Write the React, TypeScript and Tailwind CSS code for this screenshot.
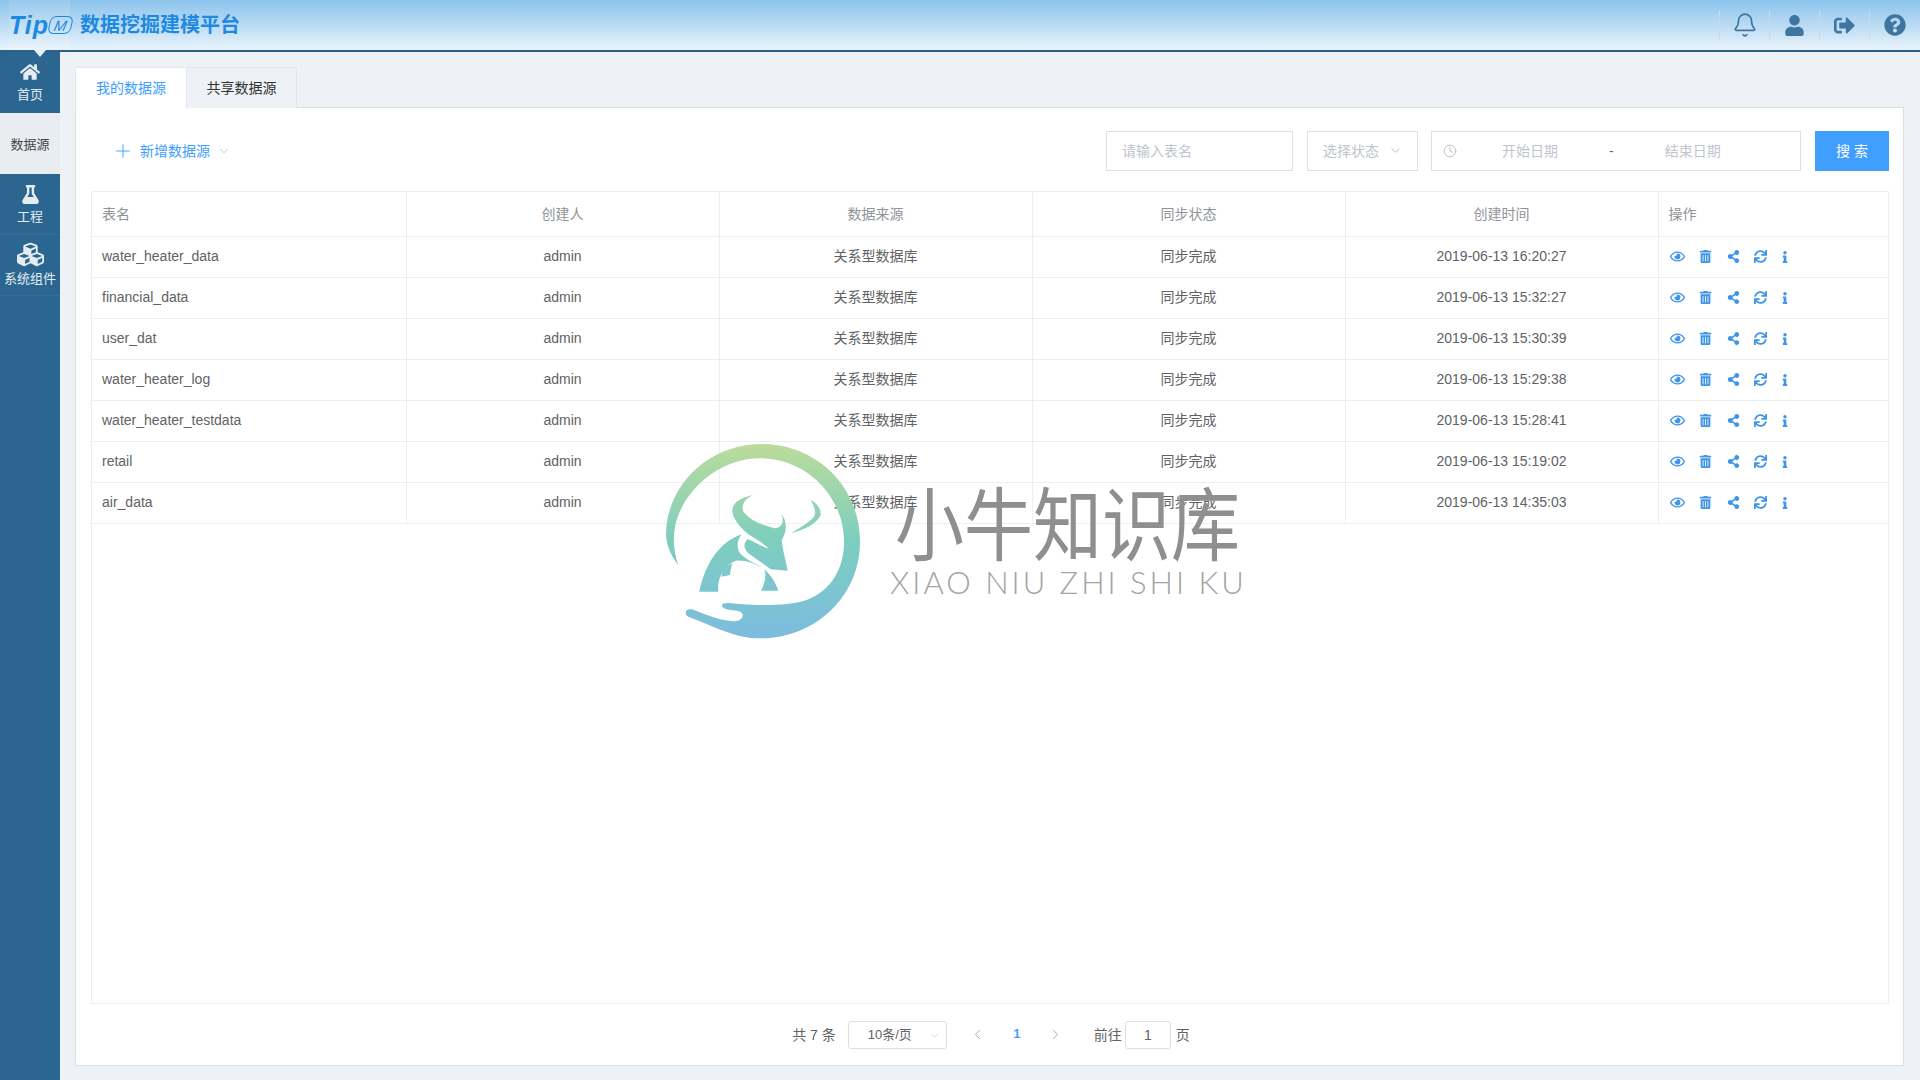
import { FaHome, FaFlask, FaCubes, FaRegEye, FaTrashAlt, FaShareAlt, FaSync, FaInfo, FaUser, FaSignOutAlt, FaQuestionCircle } from 'react-icons/fa';
import { Bell, ChevronDown, ChevronLeft, ChevronRight, Clock, Plus } from 'lucide-react';

interface Row {
    name: string
    time: string
}

const rows: Row[] = [
    { name: 'water_heater_data', time: '2019-06-13 16:20:27' },
    { name: 'financial_data', time: '2019-06-13 15:32:27' },
    { name: 'user_dat', time: '2019-06-13 15:30:39' },
    { name: 'water_heater_log', time: '2019-06-13 15:29:38' },
    { name: 'water_heater_testdata', time: '2019-06-13 15:28:41' },
    { name: 'retail', time: '2019-06-13 15:19:02' },
    { name: 'air_data', time: '2019-06-13 14:35:03' },
]

const Watermark = () => (
    <div className="absolute left-[660px] top-[440px] flex pointer-events-none">
        <svg width="210" height="205" viewBox="0 0 630 615">
            <defs>
                <linearGradient id="wm" x1="0" y1="12" x2="0" y2="595" gradientUnits="userSpaceOnUse">
                    <stop offset="0" stopColor="#bbdc9a" />
                    <stop offset="0.5" stopColor="#7dcebf" />
                    <stop offset="1" stopColor="#7cbcdf" />
                </linearGradient>
            </defs>
            <path fill="url(#wm)" d="M55 375 C30 345 18 310 18 280 C22 130 150 12 305 12 C470 12 600 140 600 305 C600 470 465 595 300 595 C225 595 165 560 85 530 C72 522 75 505 95 508 C130 520 170 540 220 544 C245 545 258 525 240 515 C225 508 195 512 187 500 C182 490 195 487 215 490 C280 497 380 500 440 480 C515 450 552 385 552 305 C552 170 440 55 300 55 C170 55 65 160 45 260 C38 300 42 340 55 375 Z" />
            <path fill="url(#wm)" d="M280 165 C240 172 215 190 217 215 C222 245 250 270 268 285 C285 295 310 310 326 326 C300 318 275 300 262 298 C250 310 250 325 265 340 C290 358 320 378 332 388 L383 392 C378 365 368 330 365 300 C378 280 385 250 365 222 C372 245 368 262 345 265 C315 258 275 245 250 215 C242 195 255 175 280 165 Z" />
            <path fill="url(#wm)" d="M245 283 C180 305 135 370 118 455 H175 C170 420 190 375 228 362 C260 360 285 372 305 382 L312 388 C322 405 312 435 303 452 H355 C345 420 325 395 300 378 C270 365 255 355 240 340 C228 320 232 300 245 283 Z" />
            <path fill="url(#wm)" d="M218 370 C195 378 185 395 185 410 L210 405 C212 392 212 382 218 370 Z" />
            <path fill="url(#wm)" d="M452 180 C462 200 470 215 462 230 C445 250 415 265 393 280 C425 270 470 255 482 225 C484 205 468 188 452 180 Z" />
        </svg>
        <div className="ml-[20px] mt-[42px] flex flex-col items-start text-[#8f8f8f]">
            <div className="ml-[5px] text-[69px] leading-[80px] whitespace-nowrap scale-y-[1.15] origin-top">小牛知识库</div>
            <div className="mt-[2px] text-[31px] leading-[36px] font-light tracking-[3px] whitespace-nowrap font-['Lato',sans-serif] text-[#a3a3a3]">XIAO NIU ZHI SHI KU</div>
        </div>
    </div>
)

const App = () => {
    return (
        <div className="relative h-[1080px] w-[1920px] overflow-hidden flex flex-col bg-[#eef2f6] text-sm text-[#606266] font-['Liberation_Sans','Noto_Sans_CJK_SC',sans-serif]">
            <header className="h-[52px] shrink-0 flex items-center border-b-2 border-[#2a618c] bg-gradient-to-b from-[#8bc3ec] to-[#e9f3fa]">
                <div className="ml-[9px] w-[61px] h-full flex items-center bg-white/10 text-[#1f89e2]">
                    <span className="text-[25px] leading-none italic font-bold tracking-[1px]">Tip</span>
                    <span className="w-[23px] h-[18px] shrink-0 border-[1.5px] border-[#1f89e2] rounded-[6px] -skew-x-12 flex items-center justify-center text-[15px] leading-none italic">M</span>
                </div>
                <h1 className="ml-[10px] text-[20px] font-bold text-[#1f89e2]">数据挖掘建模平台</h1>
                <div className="ml-auto mr-[1px] flex">
                    <div className="w-[50px] h-[30px] border-l border-[#c6dbe9] flex items-center justify-center text-[#3f769f]"><Bell size={26} strokeWidth={1.5} /></div>
                    <div className="w-[50px] h-[30px] border-l border-[#c6dbe9] flex items-center justify-center text-[#3f769f] text-[21px]"><FaUser /></div>
                    <div className="w-[50px] h-[30px] border-l border-[#c6dbe9] flex items-center justify-center text-[#3f769f] text-[21px]"><FaSignOutAlt /></div>
                    <div className="w-[50px] h-[30px] border-l border-[#c6dbe9] flex items-center justify-center text-[#3f769f] text-[22px]"><FaQuestionCircle /></div>
                </div>
            </header>

            <div className="flex-1 flex min-h-0">
                <aside className="relative w-[60px] shrink-0 bg-[#2a668f] text-[13px] text-[#e6edf2]">
                    <div className="absolute left-[34px] -top-[2px] w-0 h-0 border-x-[6px] border-x-transparent border-t-[7px] border-t-[#e4eff7]" />
                    <div className="h-[61px] flex flex-col items-center justify-end pb-[7px]">
                        <FaHome className="text-[20px] mb-[2px]" />
                        <span className="leading-[22px]">首页</span>
                    </div>
                    <div className="h-[61px] pt-[4px] flex items-center justify-center bg-[#e9edf1] text-[#444]">数据源</div>
                    <div className="h-[61px] flex flex-col items-center justify-end pb-[6px] border-b border-[#336f98]">
                        <FaFlask className="text-[19px] mb-[2px]" />
                        <span className="leading-[22px]">工程</span>
                    </div>
                    <div className="h-[61px] flex flex-col items-center justify-end pb-[5px] border-b border-[#336f98]">
                        <FaCubes className="text-[27px]" />
                        <span className="leading-[22px] whitespace-nowrap">系统组件</span>
                    </div>
                </aside>

                <main className="flex-1 min-w-0 flex flex-col pt-[15px] pl-[15px] pr-[16px] pb-[14px]">
                    <div className="flex h-[41px] shrink-0 relative z-10 -mb-[1px]">
                        <div className="w-[112px] h-[42px] pb-[2px] bg-white border border-b-0 border-[#e4e7ed] text-[#409eff] flex items-center justify-center">我的数据源</div>
                        <div className="w-[110px] h-[41px] pb-[1px] bg-[#eef2f6] border border-l-0 border-b-0 border-[#e4e7ed] text-[#333] flex items-center justify-center">共享数据源</div>
                    </div>
                    <section className="flex-1 min-h-0 flex flex-col bg-white border border-[#dcdfe6] pl-[15px] pr-[14px]">
                        <div className="h-[83px] pt-[2px] shrink-0 flex items-center">
                            <button className="ml-[21px] flex items-center text-[#409eff]">
                                <Plus size={22} strokeWidth={1} />
                                <span className="ml-[6px]">新增数据源</span>
                                <ChevronDown size={14} strokeWidth={1.2} className="ml-[7px] text-[#8fb9e4]" />
                            </button>
                            <div className="ml-auto flex items-center">
                                <input placeholder="请输入表名" className="w-[187px] h-[40px] border border-[#dcdfe6] px-[15px] placeholder:text-[#c0c4cc] outline-none" />
                                <div className="ml-[14px] w-[111px] h-[40px] border border-[#dcdfe6] flex items-center pl-[15px] text-[#c0c4cc]">
                                    选择状态
                                    <ChevronDown size={15} strokeWidth={1.2} className="ml-[9px] text-[#a8abb2]" />
                                </div>
                                <div className="ml-[13px] w-[370px] h-[40px] border border-[#dcdfe6] flex items-center text-[#c0c4cc]">
                                    <Clock size={14} strokeWidth={1.2} className="ml-[11px] text-[#a8abb2]" />
                                    <span className="ml-[45px] w-[56px] whitespace-nowrap">开始日期</span>
                                    <span className="ml-[51px] text-[#606266]">-</span>
                                    <span className="ml-[51px] w-[56px] whitespace-nowrap">结束日期</span>
                                </div>
                                <button className="ml-[14px] w-[74px] h-[40px] bg-[#409eff] text-white">搜 索</button>
                            </div>
                        </div>

                        <div className="flex-1 min-h-0 border border-[#ebeef5]">
                            <table className="w-full table-fixed border-collapse">
                                <colgroup>
                                    <col className="w-[314px]" />
                                    <col className="w-[313px]" />
                                    <col className="w-[313px]" />
                                    <col className="w-[313px]" />
                                    <col className="w-[313px]" />
                                    <col />
                                </colgroup>
                                <thead>
                                    <tr className="h-[44px] text-[#909399] border-b border-[#ebeef5]">
                                        <th className="font-normal text-left pl-[10px]">表名</th>
                                        <th className="font-normal border-l border-[#ebeef5]">创建人</th>
                                        <th className="font-normal border-l border-[#ebeef5]">数据来源</th>
                                        <th className="font-normal border-l border-[#ebeef5]">同步状态</th>
                                        <th className="font-normal border-l border-[#ebeef5]">创建时间</th>
                                        <th className="font-normal text-left pl-[10px] border-l border-[#ebeef5]">操作</th>
                                    </tr>
                                </thead>
                                <tbody>
                                    {rows.map((item: Row) => (
                                        <tr key={item.name} className="h-[41px] border-b border-[#ebeef5]">
                                            <td className="pl-[10px] pb-[2px]">{item.name}</td>
                                            <td className="text-center pb-[2px] border-l border-[#ebeef5]">admin</td>
                                            <td className="text-center pb-[2px] border-l border-[#ebeef5]">关系型数据库</td>
                                            <td className="text-center pb-[2px] border-l border-[#ebeef5]">同步完成</td>
                                            <td className="text-center pb-[2px] border-l border-[#ebeef5]">{item.time}</td>
                                            <td className="pb-[2px] border-l border-[#ebeef5]">
                                                <div className="flex items-center pl-[5px] pt-[2px] text-[#3f95e8] text-[13px]">
                                                    <span className="w-[28px] flex justify-center text-[15px]"><FaRegEye /></span>
                                                    <span className="w-[28px] flex justify-center"><FaTrashAlt /></span>
                                                    <span className="w-[27px] flex justify-center"><FaShareAlt /></span>
                                                    <span className="w-[28px] flex justify-center"><FaSync /></span>
                                                    <span className="w-[20px] flex justify-center text-[12px]"><FaInfo /></span>
                                                </div>
                                            </td>
                                        </tr>
                                    ))}
                                </tbody>
                            </table>
                        </div>

                        <div className="h-[61px] pl-[2px] shrink-0 flex items-center justify-center">
                            <span>共 7 条</span>
                            <div className="ml-[12px] w-[99px] h-[28px] pt-[2px] border border-[#dcdfe6] rounded-[3px] flex items-center pl-[19px] text-[13px]">
                                10条/页
                                <ChevronDown size={13} strokeWidth={1.2} className="ml-auto mr-[5px] text-[#c0c4cc]" />
                            </div>
                            <ChevronLeft size={17} strokeWidth={1.4} className="ml-[22px] text-[#a8abb2]" />
                            <span className="ml-[26px] w-[10px] text-center font-bold text-[13px] text-[#409eff]">1</span>
                            <ChevronRight size={17} strokeWidth={1.4} className="ml-[25px] text-[#a8abb2]" />
                            <span className="ml-[30px]">前往</span>
                            <div className="ml-[3px] w-[46px] h-[28px] border border-[#dcdfe6] rounded-[3px] flex items-center justify-center">1</div>
                            <span className="ml-[5px]">页</span>
                        </div>
                    </section>
                </main>
            </div>
            <Watermark />
        </div>
    );
};

export default App;
